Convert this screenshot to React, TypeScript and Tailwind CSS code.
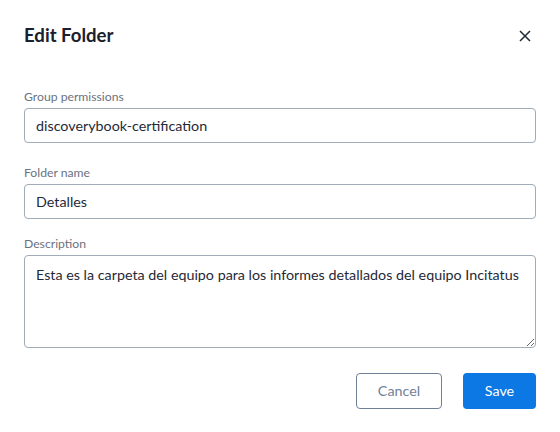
import React, { useState } from 'react'

function Field({ label, className, children }: { label: string; className?: string; children: React.ReactNode }) {
	return (
		<div className={'flex flex-col ' + (className || '')}>
			<label className="text-[12.2px] leading-[16px] text-[#6b7280] mb-[3px]">{label}</label>
			{children}
		</div>
	)
}

export default function App() {
	const [group, setGroup] = useState('discoverybook-certification')
	const [name, setName] = useState('Detalles')
	const [desc, setDesc] = useState(
		'Esta es la carpeta del equipo para los informes detallados del equipo Incitatus'
	)

	const inputCls =
		'w-full h-[35px] px-[11px] rounded-[4px] border border-[#a0acb8] bg-white text-[14.3px] text-[#1f2937] outline-none'

	return (
		<div
			className="w-[560px] h-[432px] bg-white px-[24px] pt-[23px]"
			style={{ fontFamily: 'Lato, "Noto Sans", sans-serif' }}>
			<div className="flex items-center justify-between h-[26px]">
				<h2 className="text-[18.6px] font-bold text-[#1a202c]">Edit Folder</h2>
				<button className="w-[20px] h-[20px] flex items-center justify-center mr-[1px] text-[#1f2937]">
					<svg width="12" height="12" viewBox="0 0 12 12" fill="none" stroke="currentColor" strokeWidth="1.5">
						<path d="M1 1l10 10M11 1L1 11" />
					</svg>
				</button>
			</div>

			<form className="flex flex-col mt-[40px]">
				<Field label="Group permissions">
					<input className={inputCls} value={group} onChange={e => setGroup(e.target.value)} />
				</Field>
				<Field label="Folder name" className="mt-[22px]">
					<input className={inputCls} value={name} onChange={e => setName(e.target.value)} />
				</Field>
				<Field label="Description" className="mt-[17px]">
					<textarea
						className="w-full h-[93px] px-[11px] pt-[9px] pb-[7px] rounded-[4px] border border-[#a0acb8] bg-white text-[14.3px] leading-[20px] text-[#1f2937] outline-none resize-y"
						value={desc}
						onChange={e => setDesc(e.target.value)}
					/>
				</Field>

				<div className="flex justify-end gap-[21px] mt-[25px]">
					<button
						type="button"
						className="w-[86px] h-[36px] rounded-[4px] border border-[#718096] text-[14.3px] text-[#718096] bg-white">
						Cancel
					</button>
					<button
						type="submit"
						className="w-[73px] h-[36px] rounded-[4px] bg-[#0b78e3] text-[14.3px] text-white">
						Save
					</button>
				</div>
			</form>
		</div>
	)
}
